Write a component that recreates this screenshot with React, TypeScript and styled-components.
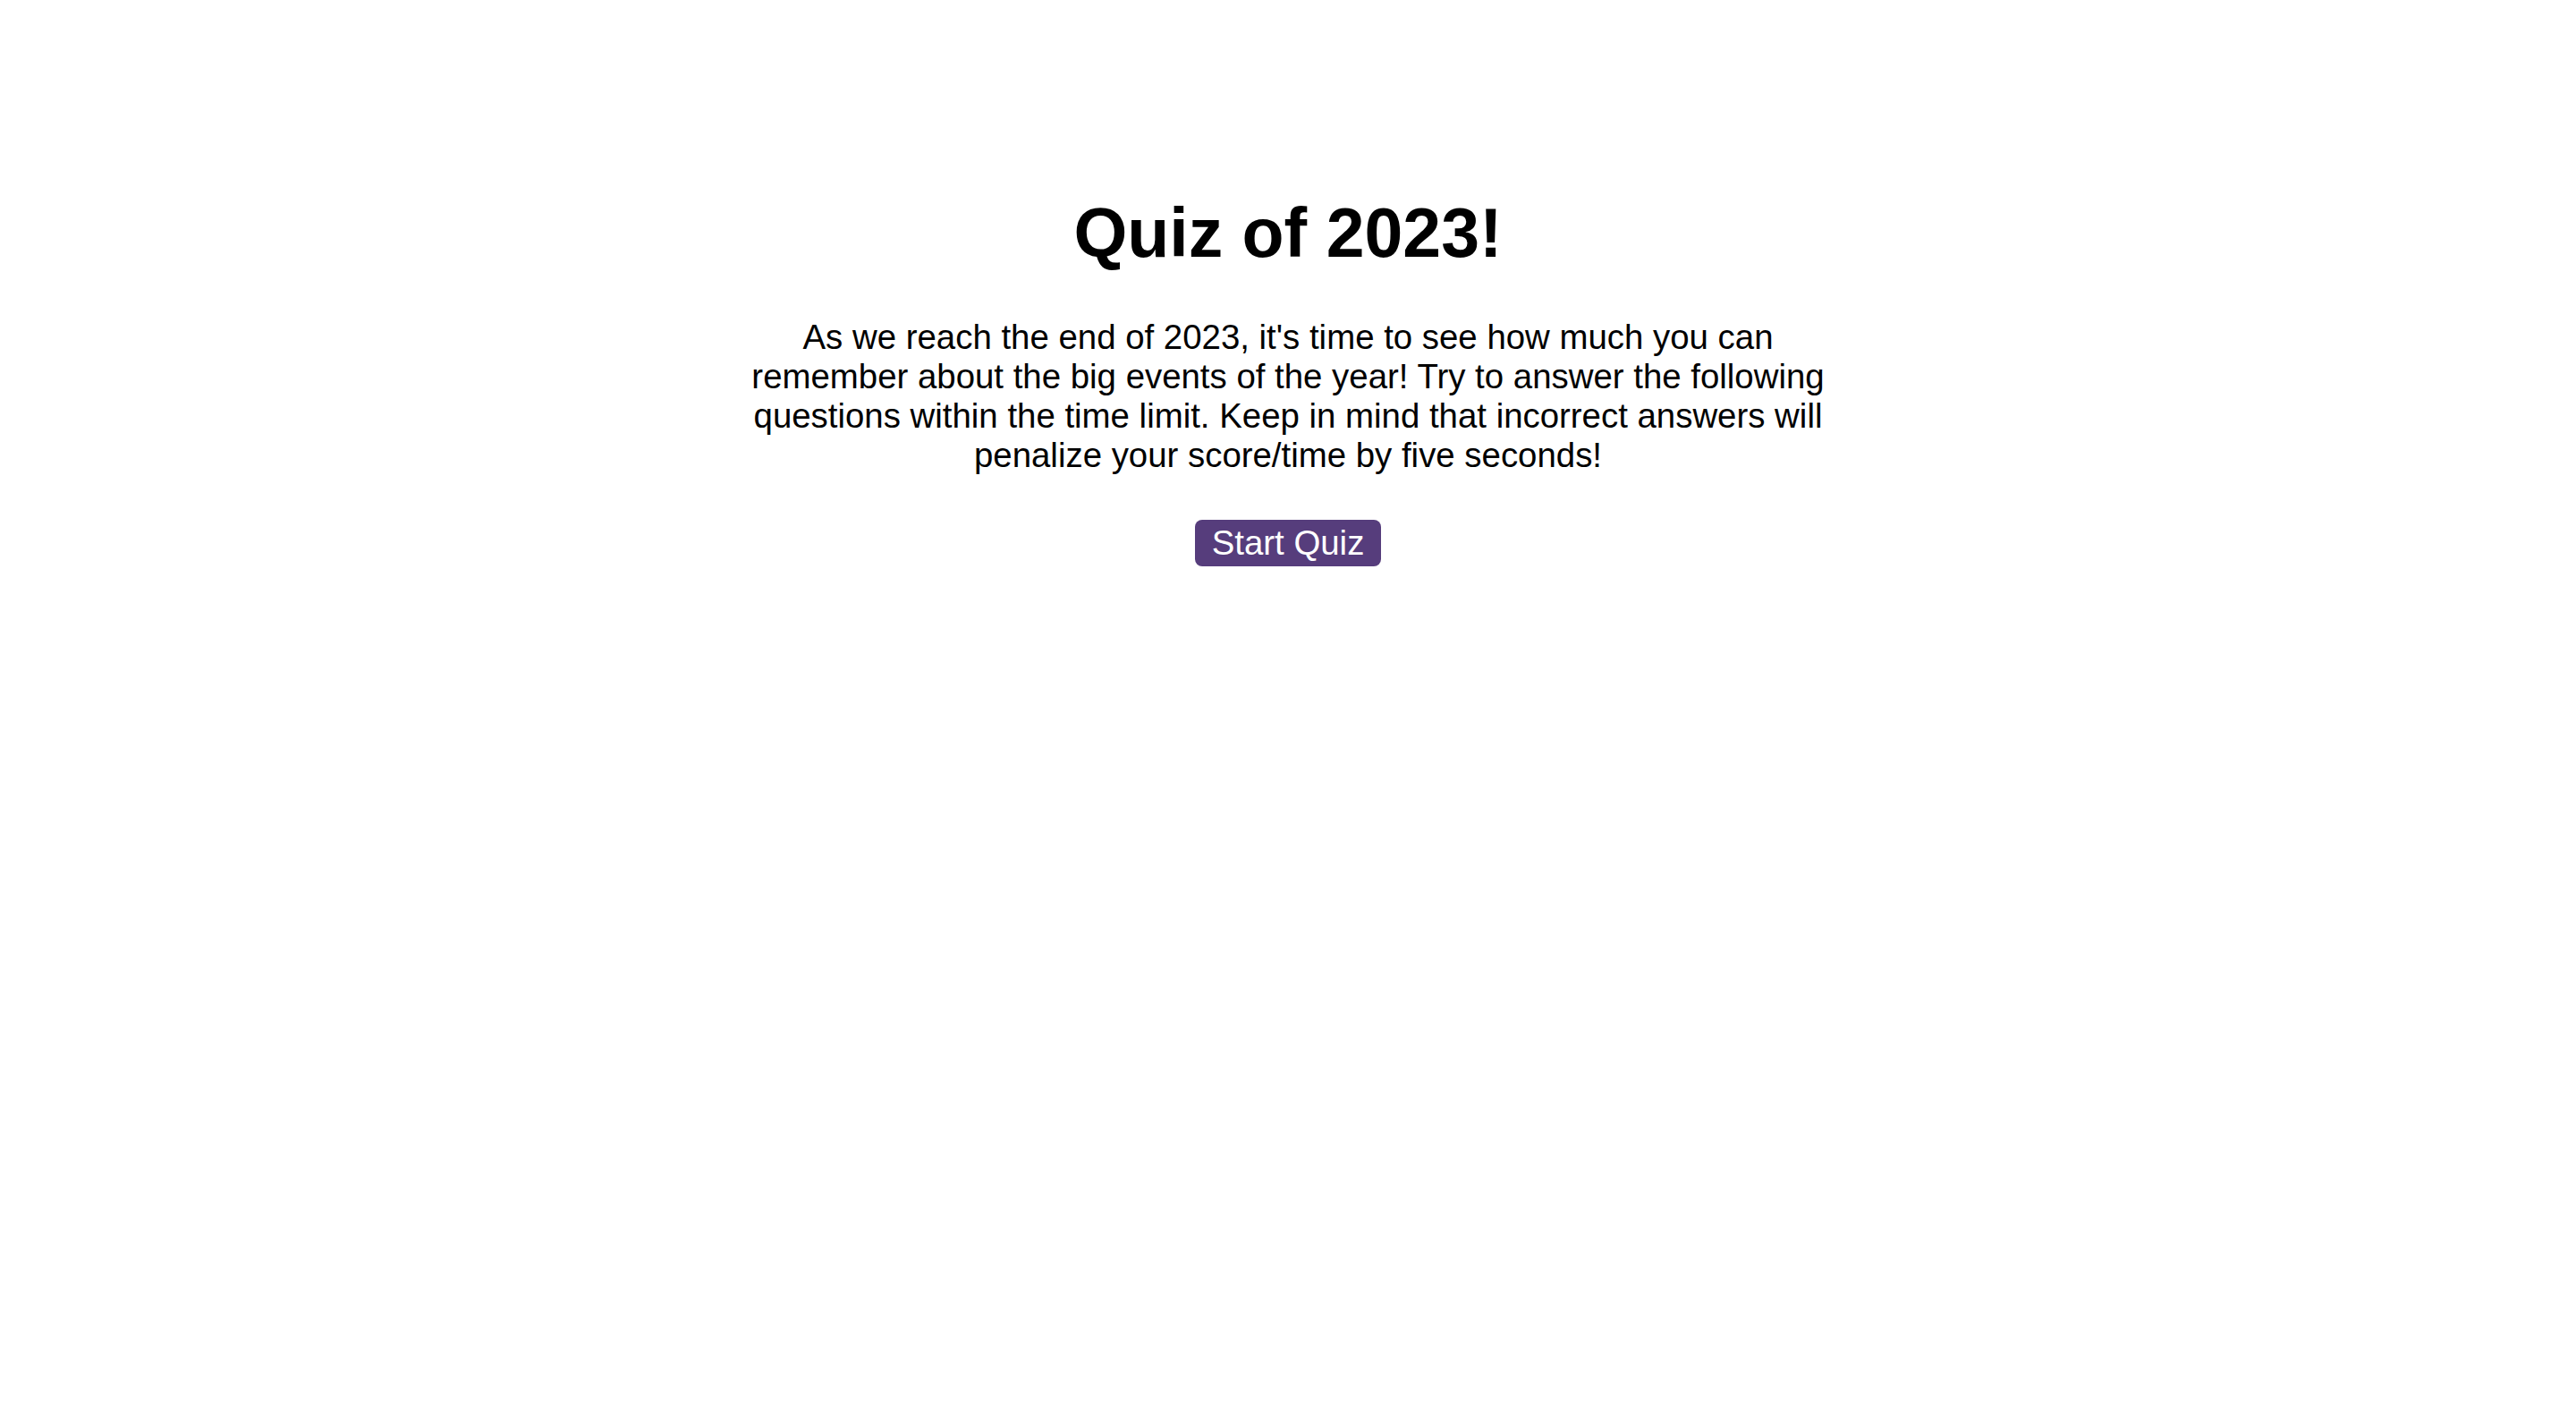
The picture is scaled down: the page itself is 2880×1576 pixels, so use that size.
import React from "react";
import styled, { createGlobalStyle } from "styled-components";

const GlobalStyle = createGlobalStyle`
  html, body {
    margin: 0;
    padding: 0;
    background: #ffffff;
  }
  body {
    font-family: "Liberation Sans", Arial, Helvetica, sans-serif;
    color: #000000;
  }
`;

const Page = styled.main`
  display: flex;
  flex-direction: column;
  align-items: center;
  padding-top: 216px;
  text-align: center;
`;

const Title = styled.h1`
  margin: 0;
  font-size: 77px;
  font-weight: 700;
  line-height: normal;
`;

const Intro = styled.p`
  margin: 50px 0 0;
  width: 1240px;
  font-size: 38.4px;
  line-height: normal;
`;

const StartButton = styled.button`
  margin-top: 50px;
  padding: 4px 19px;
  border: none;
  border-radius: 8px;
  background: #563d7c;
  color: #ffffff;
  font-family: "Liberation Sans", Arial, Helvetica, sans-serif;
  font-size: 38.4px;
  line-height: normal;
  cursor: pointer;
`;

export default function App() {
  return (
    <>
      <GlobalStyle />
      <Page>
        <Title>Quiz of 2023!</Title>
        <Intro>
          As we reach the end of 2023, it's time to see how much you can
          remember about the big events of the year! Try to answer the
          following questions within the time limit. Keep in mind that
          incorrect answers will penalize your score/time by five seconds!
        </Intro>
        <StartButton>Start Quiz</StartButton>
      </Page>
    </>
  );
}
